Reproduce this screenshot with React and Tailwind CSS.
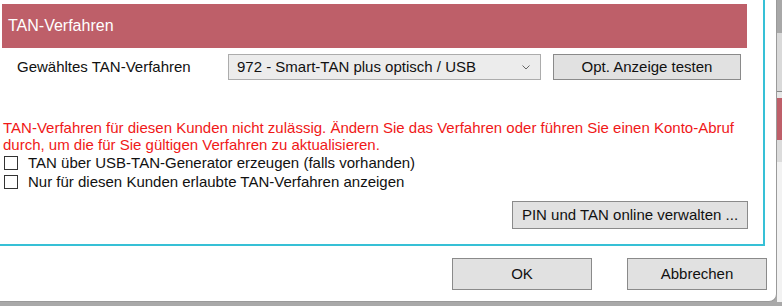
import React from "react";

function Btn({ className, children }) {
  return (
    <div
      className={
        "flex items-center justify-center bg-[#e1e1e1] border border-[#8a8a8a] text-[15px] text-[#111] " +
        className
      }
    >
      {children}
    </div>
  );
}

function Check({ label }) {
  return (
    <div className="flex items-center h-[19px]">
      <div className="ml-[4px] w-[14px] h-[14px] border border-[#333] bg-white" />
      <span className="ml-[10px] text-[15px] text-[#111] leading-[19px]">{label}</span>
    </div>
  );
}

export default function App() {
  return (
    <div className="w-[782px] h-[306px] overflow-hidden bg-[#a9a9a9] flex flex-col font-['Liberation_Sans',Arial,sans-serif]">
      <div className="flex h-[302px]">
        <div className="w-[777px] h-[302px] bg-white border-r border-b border-[#9a9a9a] rounded-br-[8px] flex flex-col">
          <div className="w-[765px] h-[246px] border-r-2 border-b-2 border-[#36c0d6] flex flex-col pt-[4px]">
            <div className="ml-[2px] w-[745px] h-[44px] bg-[#be5f69] flex items-center pl-[6px] text-white text-[16px]">
              TAN-Verfahren
            </div>
            <div className="flex items-center h-[26px] mt-[6px]">
              <div className="w-[228px] pl-[17px] text-[15px] text-[#111]">Gewähltes TAN-Verfahren</div>
              <div className="w-[313px] h-[26px] bg-[#ececec] border border-[#acacac] flex items-center pl-[8px] pr-[10px] text-[15px] text-[#111]">
                <span className="flex-1">972 - Smart-TAN plus optisch / USB</span>
                <svg width="8" height="5" viewBox="0 0 8 5">
                  <path d="M0.5 0.5 L4 4 L7.5 0.5" fill="none" stroke="#666" strokeWidth="1" />
                </svg>
              </div>
              <Btn className="ml-[12px] w-[188px] h-[26px]">Opt. Anzeige testen</Btn>
            </div>
            <div className="mt-[39px] pl-[3px] text-[15px] leading-[17px] text-[#f01818]">
              TAN-Verfahren für diesen Kunden nicht zulässig. Ändern Sie das Verfahren oder führen Sie einen Konto-Abruf
              <br />
              durch, um die für Sie gültigen Verfahren zu aktualisieren.
            </div>
            <Check label="TAN über USB-TAN-Generator erzeugen (falls vorhanden)" />
            <Check label="Nur für diesen Kunden erlaubte TAN-Verfahren anzeigen" />
            <div className="flex justify-end mt-[10px] mr-[15px]">
              <Btn className="w-[236px] h-[28px]">PIN und TAN online verwalten ...</Btn>
            </div>
          </div>
          <div className="flex justify-end mt-[12px] mr-[9px] gap-[35px]">
            <Btn className="w-[140px] h-[32px]">OK</Btn>
            <Btn className="w-[140px] h-[32px]">Abbrechen</Btn>
          </div>
        </div>
        <div className="w-[5px] flex flex-col">
          <div className="h-[33px] bg-[#a8a8a8]" />
          <div className="h-[58px] bg-[#d9d9d9]" />
          <div className="h-[1px] bg-[#888]" />
          <div className="h-[6px] bg-[#e6e6e6]" />
          <div className="h-[42px] bg-[#be5f69]" />
          <div className="h-[22px] bg-[#dcdcdc]" />
          <div className="flex-1 bg-[#f2f2f2]" />
        </div>
      </div>
    </div>
  );
}
